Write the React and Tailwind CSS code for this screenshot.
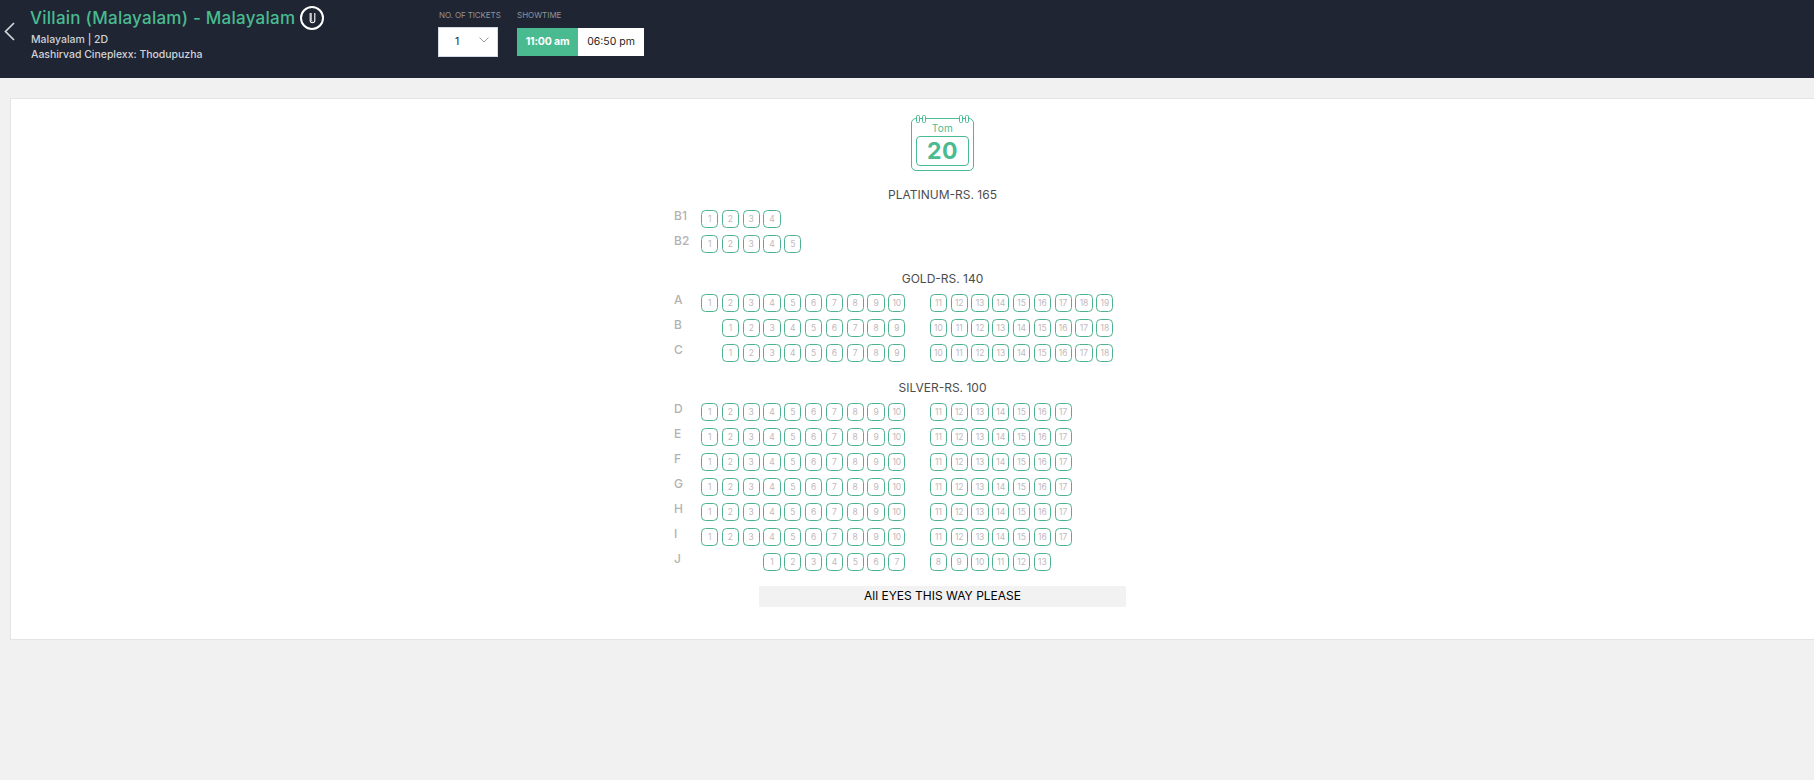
const range = (from, to) => Array.from({ length: to - from + 1 }, (_, i) => from + i);
const gap = (n) => Array(n).fill(null);
const full = (name) => ({ name, seats: [...range(1, 10), null, ...range(11, 17)] });

const sections = [
  {
    title: "PLATINUM-RS. 165",
    rows: [
      { name: "B1", seats: range(1, 4) },
      { name: "B2", seats: range(1, 5) },
    ],
  },
  {
    title: "GOLD-RS. 140",
    rows: [
      { name: "A", seats: [...range(1, 10), null, ...range(11, 19)] },
      { name: "B", seats: [null, ...range(1, 9), null, ...range(10, 18)] },
      { name: "C", seats: [null, ...range(1, 9), null, ...range(10, 18)] },
    ],
  },
  {
    title: "SILVER-RS. 100",
    rows: [
      ..."DEFGHI".split("").map(full),
      { name: "J", seats: [...gap(3), ...range(1, 7), null, ...range(8, 13)] },
    ],
  },
];

function Header() {
  return (
    <header className="flex h-[78px] items-start bg-[#1f2533]">
      <svg className="mt-[22px] ml-1 h-5 w-[11px] shrink-0" viewBox="0 0 11 20" fill="none" stroke="#d3d5d8" strokeWidth="1.7">
        <path d="M10 1 1.5 9.5 10 18" />
      </svg>
      <div className="ml-[15px] w-[408px] shrink-0">
        <div className="flex h-9 items-center">
          <h1 className="w-[270px] text-[17px] leading-9 font-medium tracking-[0.25px] whitespace-nowrap text-[#4abb90]">
            Villain (Malayalam) - Malayalam
          </h1>
          <div className="flex size-6 items-center justify-center rounded-full border-2 border-white">
            <svg className="h-[11px] w-[7px]" viewBox="0 0 7 11" fill="none" stroke="#fff">
              <path d="M1.2 0v7.6q0 2.2 2.3 2.2t2.3-2.2V0" strokeWidth="1.1" />
              <path d="M2.4 0v7.2q0 1 1.1 1" strokeWidth=".7" />
            </svg>
          </div>
        </div>
        <p className="-mt-1 pl-px text-[10.5px] leading-[15px] font-medium text-[#d0d2d6]">Malayalam | 2D</p>
        <p className="pl-px text-[10.5px] leading-[15px] font-medium tracking-[-0.03px] text-[#d0d2d6]">Aashirvad Cineplexx: Thodupuzha</p>
      </div>
      <div className="w-[79px] shrink-0 pt-[9px]">
        <div className="pl-px text-[8px] leading-3 tracking-[-0.1px] whitespace-nowrap text-[#91949a]">NO. OF TICKETS</div>
        <div className="mt-[6px] flex h-[30px] w-[60px] items-center border border-[#d5dbe5] bg-white pr-2 pl-4 text-[10.5px] text-[#222]">
          <span className="flex-1">1</span>
          <svg className="-mt-1 h-[6px] w-[10px]" viewBox="0 0 10 6" fill="none" stroke="#999">
            <path d="M.5.5 5 5 9.5.5" />
          </svg>
        </div>
      </div>
      <div className="pt-[9px]">
        <div className="text-[8px] leading-3 text-[#91949a]">SHOWTIME</div>
        <div className="mt-[7px] flex h-7 text-[10.5px] leading-7">
          <div className="w-[61px] bg-[#4abb90] text-center font-bold tracking-[-0.15px] text-white">11:00 am</div>
          <div className="w-[66px] bg-white text-center text-[#222]">06:50 pm</div>
        </div>
      </div>
    </header>
  );
}

function Calendar() {
  return (
    <div className="relative h-[53px] w-[63px] rounded-[5px] border border-[#4abb90] px-1 text-center text-[#4abb90]">
      <svg className="absolute -top-1 left-1 h-[9px] w-[53px]" viewBox="0 0 53 9" fill="#fff" stroke="#4abb90">
        {[0.5, 6.5, 43.5, 49.5].map((x) => (
          <rect key={x} x={x} y=".5" width="3" height="7" rx="1" />
        ))}
      </svg>
      <div className="h-[17px] pt-px text-[10px] leading-4 tracking-[0.3px]">Tom</div>
      <div className="h-[30px] rounded-[4px] border border-[#4abb90] text-[23px] leading-[29px] font-bold tracking-[0.6px]">20</div>
    </div>
  );
}

function Row({ name, seats }) {
  return (
    <div className="-ml-px flex h-[25px]">
      <div className="w-[27px] shrink-0 text-[12px] leading-3 font-medium text-[#b2b2b2]">{name}</div>
      {seats.map((n, i) => (
        <div key={i} className="w-[20.8px] shrink-0">
          {n !== null && (
            <div className="h-[18px] w-[17.3px] rounded-[4.5px] border border-[#4fb28e] text-center text-[8.5px] leading-4 text-[#c4b8bb]">
              {n}
            </div>
          )}
        </div>
      ))}
    </div>
  );
}

export default function App() {
  return (
    <div className="h-[780px] overflow-hidden bg-[#f1f1f1] font-['Inter',sans-serif]">
      <Header />
      <main className="mt-5 ml-[10px] flex h-[542px] w-[1865px] flex-col items-center border border-[#e4e4e4] bg-white pt-[19px]">
        <Calendar />
        {sections.map((s, i) => (
          <section key={s.title} className={i === 0 ? "mt-[15px] w-[535px]" : "mt-[10px] w-[535px]"}>
            <h2 className="h-6 text-center text-[12px] leading-[17px] text-[#4d4d4d]">{s.title}</h2>
            {s.rows.map((r) => (
              <Row key={r.name} {...r} />
            ))}
          </section>
        ))}
        <div className="mt-2 h-[21px] w-[367px] bg-[#f2f2f2] text-center text-[12px] leading-5 text-black">All EYES THIS WAY PLEASE</div>
      </main>
    </div>
  );
}
